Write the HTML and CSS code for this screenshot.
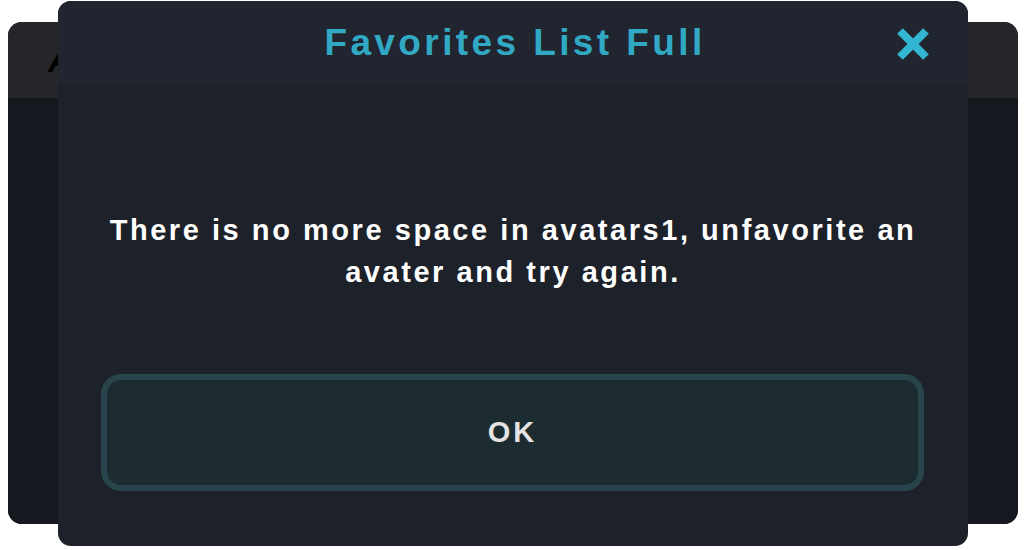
FILE: index.html
```html
<!DOCTYPE html>
<html>
<head>
<meta charset="utf-8">
<link rel="stylesheet" href="styles.css">
</head>
<body>
<div class="window">
  <div class="window-header"><span class="window-title">Avatars</span></div>
  <div class="window-body"></div>
</div>
<div class="dialog">
  <div class="dialog-header">
    <h1 class="dialog-title">Favorites List Full</h1>
    <button class="close" aria-label="Close">
      <svg width="36" height="36" viewBox="0 0 36 36"><path d="M5 5 L31 31 M31 5 L5 31" stroke="#33b6d1" stroke-width="8" stroke-linecap="butt"/></svg>
    </button>
  </div>
  <div class="dialog-body">
    <p class="message">There is no more space in avatars1, unfavorite an avater and try again.</p>
  </div>
  <button class="ok">OK</button>
</div>
</body>
</html>
```
FILE: styles.css
```css
html, body {
  margin: 0;
  padding: 0;
  background: #ffffff;
  width: 1024px;
  height: 550px;
  overflow: hidden;
  font-family: "Liberation Sans", Arial, sans-serif;
}
.window {
  margin: 22px 6px 0 8px;
  height: 502px;
  border-radius: 14px;
  overflow: hidden;
  display: flex;
  flex-direction: column;
  background: #15181e;
}
.window-header {
  height: 76px;
  background: #24262a;
  display: flex;
  align-items: center;
  padding-left: 40px;
}
.window-title {
  font-size: 34px;
  font-weight: bold;
  font-style: italic;
  color: #000;
}
.window-body {
  flex: 1;
  background: #15181e;
}
.dialog {
  position: absolute;
  left: 58px;
  top: 1px;
  width: 910px;
  height: 545px;
  border-radius: 13px;
  overflow: hidden;
  background: #1d2129;
  display: flex;
  flex-direction: column;
}
.dialog-header {
  height: 83px;
  background: #21252f;
  display: flex;
  align-items: center;
  justify-content: center;
  position: relative;
}
.dialog-title {
  margin: 0 0 0 4px;
  font-size: 37px;
  font-weight: bold;
  letter-spacing: 3.4px;
  color: #31a9c4;
}
.close {
  position: absolute;
  right: 37px;
  top: 25px;
  width: 36px;
  height: 36px;
  padding: 0;
  border: 0;
  background: none;
}
.close svg { display: block; }
.dialog-body {
  flex: 1;
  padding: 125px 20px 0;
}
.message {
  margin: 0;
  text-align: center;
  color: #ffffff;
  font-size: 29px;
  font-weight: bold;
  line-height: 42px;
  letter-spacing: 2.55px;
}
.ok {
  margin: 0 44px 55px 43px;
  height: 117px;
  box-sizing: border-box;
  border: 6px solid #27454b;
  border-radius: 20px;
  background: #1c2c31;
  color: #e4e4e4;
  font-family: "Liberation Sans", Arial, sans-serif;
  font-size: 29px;
  font-weight: bold;
  letter-spacing: 3px;
}
```
